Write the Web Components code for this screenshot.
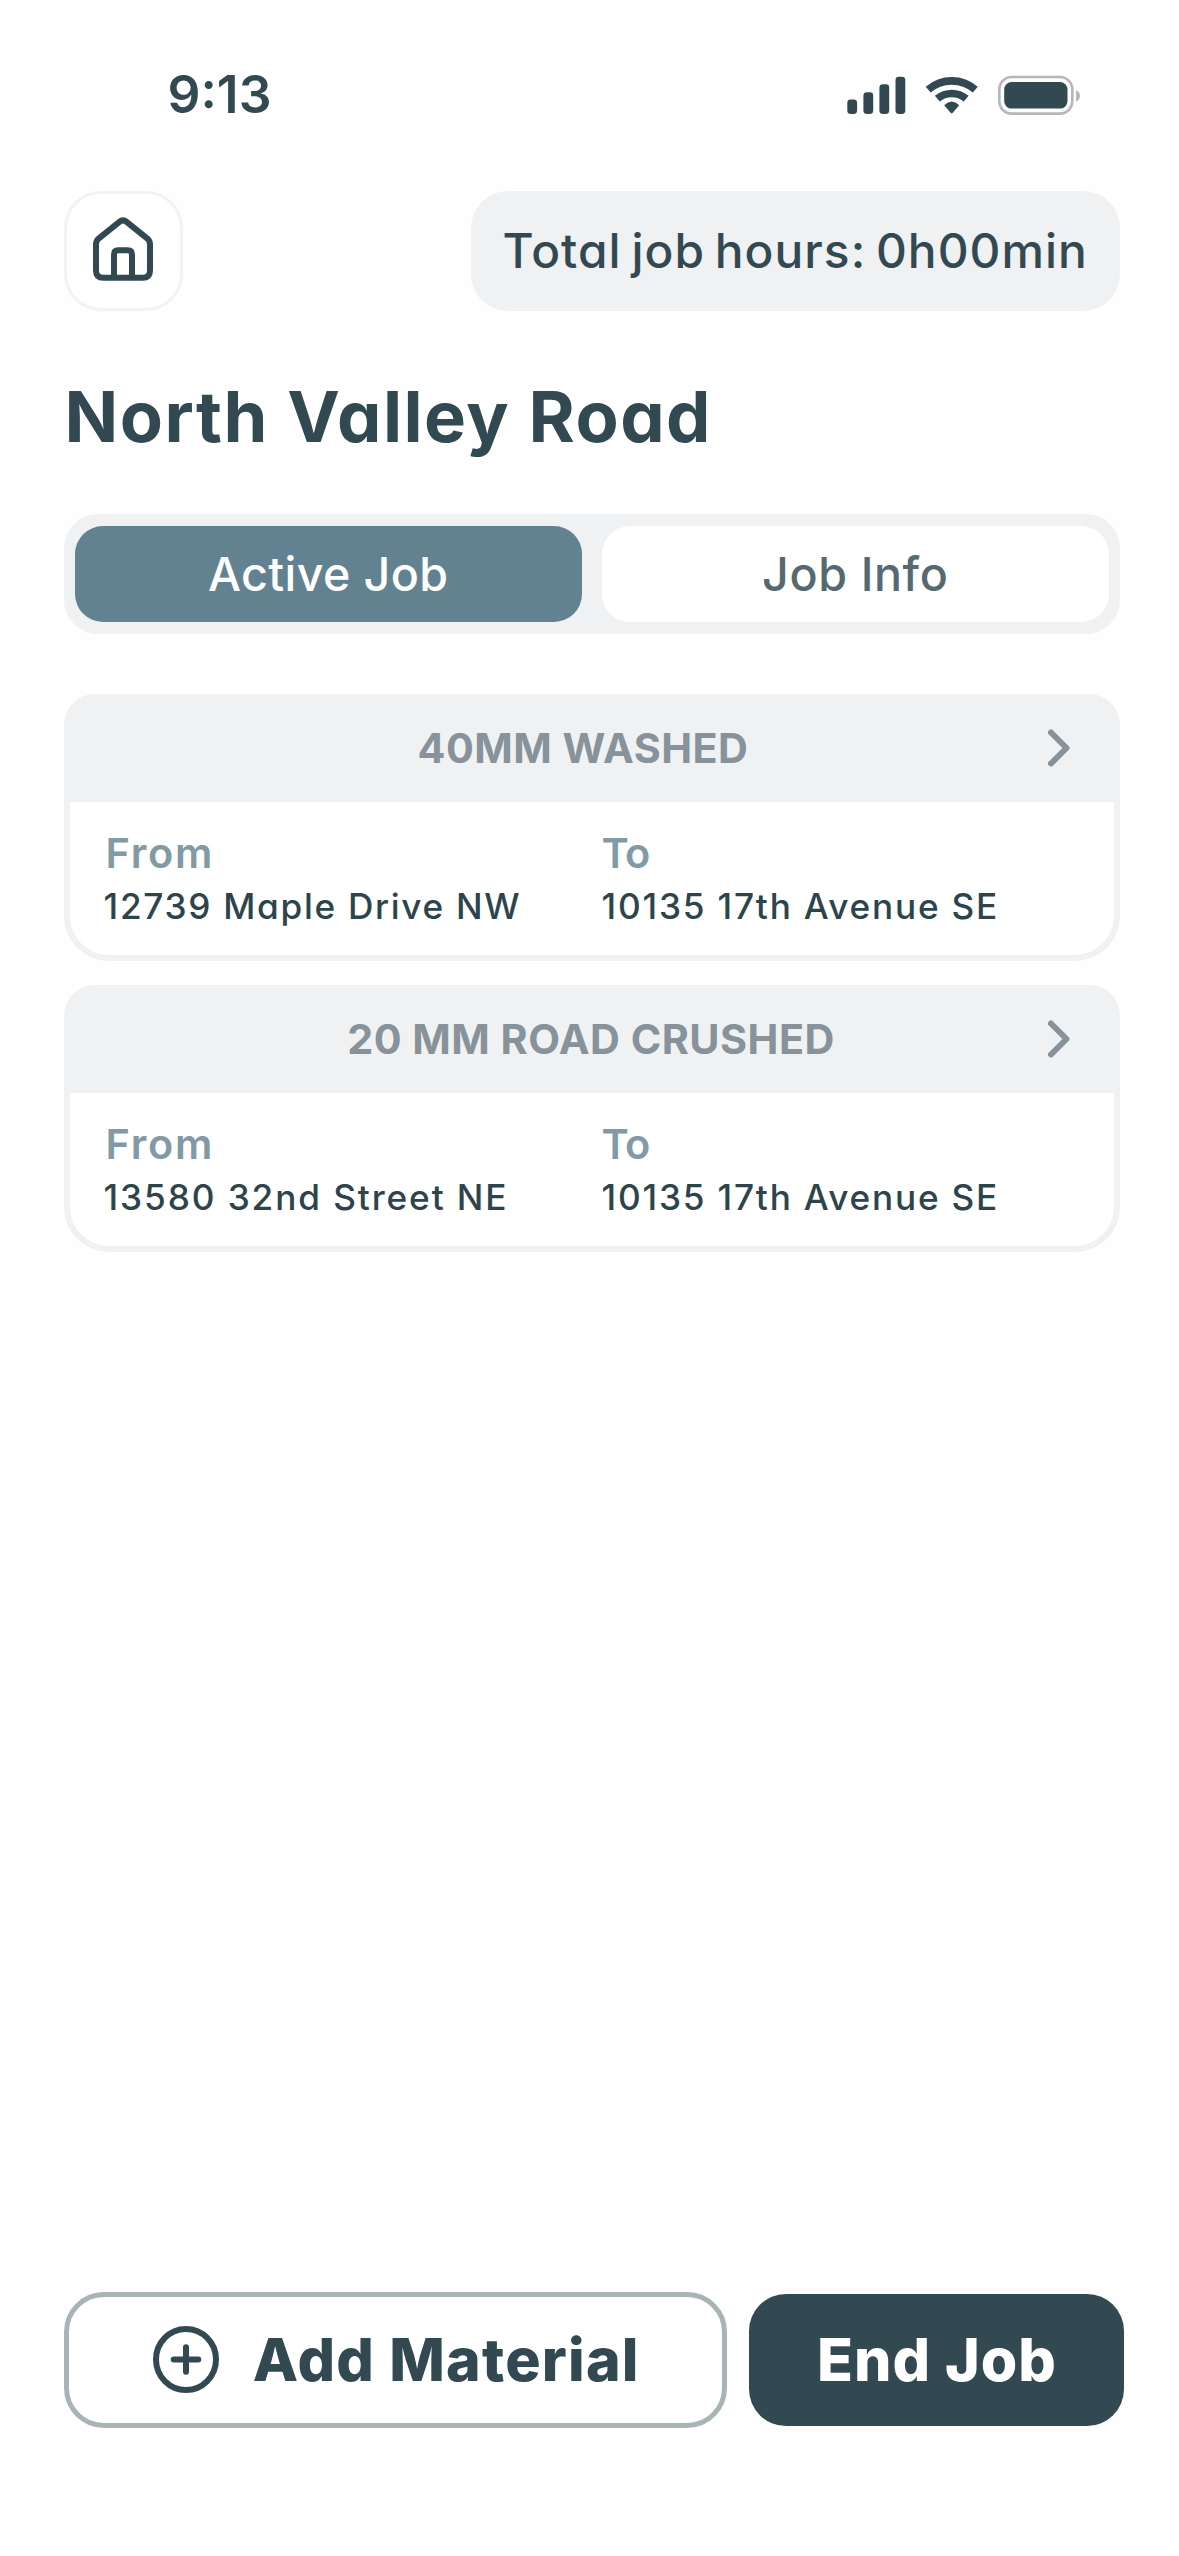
<!DOCTYPE html>
<html lang="en">
<head>
<meta charset="utf-8">
<title>North Valley Road</title>
<style>
  html, body { margin: 0; background: #fefefe; }
  body { font-family: Inter, "Liberation Sans", sans-serif; color: #334951; }
</style>
</head>
<body>
<job-screen>
  <status-bar slot="status">9:13</status-bar>
  <top-bar slot="top">Total job hours: 0h00min</top-bar>
  <job-title slot="title">North Valley Road</job-title>
  <tab-bar slot="tabs">
    <tab-item active style="--ls:.4px">Active Job</tab-item>
    <tab-item style="--ls:.6px">Job Info</tab-item>
  </tab-bar>
  <material-card style="--nudge:16px">
    <span slot="name">40MM WASHED</span>
    <address-field slot="from" style="--label-ls:1.7px;--ls:1.7px"><span slot="label">From</span>12739 Maple Drive NW</address-field>
    <address-field slot="to" style="--label-ls:-.6px;--label-pad:.5px;--ls:1.8px"><span slot="label">To</span>10135 17th Avenue SE</address-field>
  </material-card>
  <material-card>
    <span slot="name">20 MM ROAD CRUSHED</span>
    <address-field slot="from" style="--label-ls:1.7px;--ls:1.9px"><span slot="label">From</span>13580 32nd Street NE</address-field>
    <address-field slot="to" style="--label-ls:-.6px;--label-pad:.5px;--ls:1.8px"><span slot="label">To</span>10135 17th Avenue SE</address-field>
  </material-card>
  <action-button slot="actions" kind="outline">
    <svg slot="icon" width="66" height="67" viewBox="0 0 66 67" fill="none" stroke="#334951" stroke-linecap="round"><ellipse cx="33" cy="33.5" rx="30" ry="30.5" stroke-width="6"/><path d="M33 21.2v24.6M20.7 33.5h24.6" stroke-width="6"/></svg>
    Add Material</action-button>
  <action-button slot="actions" kind="solid">End Job</action-button>
</job-screen>
<script>
const define = (name, html) => customElements.define(name, class extends HTMLElement {
  constructor() {
    super();
    const t = document.createElement('template');
    t.innerHTML = html;
    this.attachShadow({ mode: 'open' }).append(t.content.cloneNode(true));
  }
});

define('job-screen', `
<style>
  :host { display: flex; flex-direction: column; box-sizing: border-box; width: 1179px; height: 2556px; padding: 58px 55.5px 128px 63.5px; background: #fefefe; }
  .list { display: flex; flex-direction: column; gap: 24px; margin: 60px 3.5px 0 0; }
  .actions { display: flex; align-items: center; gap: 21.5px; margin-top: auto; }
</style>
<slot name="status"></slot>
<slot name="top"></slot>
<slot name="title"></slot>
<slot name="tabs"></slot>
<div class="list"><slot></slot></div>
<div class="actions"><slot name="actions"></slot></div>`);

define('status-bar', `
<style>
  :host { display: flex; justify-content: space-between; align-items: center; height: 73px; padding: 0 42.5px 0 104px; }
  .time { font-size: 51.5px; font-weight: 600; line-height: 73px; }
  svg { display: block; }
</style>
<span class="time"><slot></slot></span>
<svg width="234" height="40" viewBox="847 74.6 234 40" fill="#334951">
  <rect x="847.3" y="99" width="9.8" height="14.5" rx="3.4"/>
  <rect x="863.4" y="91.8" width="9.8" height="21.7" rx="3.4"/>
  <rect x="879.4" y="83.8" width="9.8" height="29.7" rx="3.4"/>
  <rect x="895.5" y="76.3" width="9.8" height="37.2" rx="3.4"/>
  <g fill="none" stroke="#334951" stroke-width="7.6">
    <path d="M928.2 89.2A36 36 0 0 1 975.3 89.2"/>
    <path d="M937.3 98.3A22.6 22.6 0 0 1 966.2 98.3"/>
  </g>
  <path d="M944.2 104.9q7.5-7.4 15 0l-6.6 7.8q-.9.9-1.8 0z"/>
  <rect x="999.3" y="76.6" width="73" height="36.6" rx="12.5" fill="none" stroke="#b4b8bc" stroke-width="2.7"/>
  <rect x="1004.2" y="81.6" width="63.3" height="26.6" rx="7.5"/>
  <path d="M1076 89.8c5.4 2.2 5.4 9.4 0 11.6z" fill="#b4b8bc"/>
</svg>`);

define('top-bar', `
<style>
  :host { display: flex; justify-content: space-between; margin: 59.7px 3.5px 0 0; height: 120px; }
  .home { display: flex; align-items: center; justify-content: center; box-sizing: border-box; width: 119.5px; padding-bottom: 4px; border: 3px solid #f2f3f4; border-radius: 37px; background: #fff; }
  .hours { display: flex; align-items: center; justify-content: center; width: 649.5px; border-radius: 37px; background: #eff1f3; font-size: 47.8px; font-weight: 500; letter-spacing: 1.05px; word-spacing: -4px; font-feature-settings: "cv11"; white-space: nowrap; }
</style>
<div class="home">
  <svg width="62" height="64" viewBox="92 217 62 64" fill="none" stroke="#334951" stroke-width="6" stroke-linejoin="round">
    <path d="M96 244.5q0-3.6 2.6-5.9L119.4 221.9q3.6-2.9 7.2 0L147.4 238.6q2.6 2.3 2.6 5.9V270.5q0 7.3-7.3 7.3H103.3q-7.3 0-7.3-7.3z"/>
    <path d="M114 277.5V254.5q0-4.3 4.3-4.3h9.4q4.3 0 4.3 4.3V277.5"/>
  </svg>
</div>
<div class="hours"><span><slot></slot></span></div>`);

define('job-title', `
<style>
  :host { display: block; margin-top: 66px; padding-left: 1px; line-height: 80px; font-size: 70.5px; font-weight: 700; letter-spacing: 1.5px; font-feature-settings: "cv11"; white-space: nowrap; }
</style>
<slot></slot>`);

define('tab-bar', `
<style>
  :host { display: flex; gap: 20.5px; box-sizing: border-box; height: 120px; margin: 57.6px 3.5px 0 0; padding: 12px 11.5px; border-radius: 34px; background: #eff1f3; }
</style>
<slot></slot>`);

define('tab-item', `
<style>
  :host { display: flex; flex: 1; align-items: center; justify-content: center; border-radius: 28px; background: #fff; color: #566970; font-size: 46.6px; font-weight: 500; letter-spacing: var(--ls); font-feature-settings: "cv11"; }
  :host([active]) { background: #628291; color: #fff; }
</style>
<span><slot></slot></span>`);

define('material-card', `
<style>
  :host { display: flex; flex-direction: column; box-sizing: border-box; height: 266.7px; border: 6px solid #eff1f3; border-top: 0; border-radius: 31px 31px 45px 45px; background: #fff; }
  header { display: flex; align-items: center; height: 107.7px; margin: 0 -1px; padding: 0 44.5px 0 66px; background: #eff1f3; border-radius: 26px 26px 0 0; }
  .name { flex: 1; text-align: center; margin-right: var(--nudge, 0px); color: #87929a; font-size: 41.3px; font-weight: 700; letter-spacing: .5px; }
  .body { display: grid; grid-template-columns: 498px 1fr; padding: 23px 0 0 33.5px; }
  svg { display: block; }
</style>
<header>
  <span class="name"><slot name="name"></slot></span>
  <svg width="23" height="38" viewBox="0 0 23 38" fill="none" stroke="#87929a" stroke-width="6" stroke-linecap="round" stroke-linejoin="round"><path d="M3 3.5L18.5 19L3 34.5"/></svg>
</header>
<div class="body"><slot name="from"></slot><slot name="to"></slot></div>`);

define('address-field', `
<style>
  :host { display: flex; flex-direction: column; white-space: nowrap; font-feature-settings: "cv11"; }
  .label { padding-left: var(--label-pad, 2.5px); line-height: 56px; font-size: 41.5px; font-weight: 600; letter-spacing: var(--label-ls); color: #819aa6; }
  .value { padding-left: .6px; line-height: 50px; font-size: 35.2px; font-weight: 500; letter-spacing: var(--ls); color: #2d444c; }
</style>
<span class="label"><slot name="label"></slot></span>
<span class="value"><slot></slot></span>`);

define('action-button', `
<style>
  :host { display: flex; align-items: center; justify-content: center; gap: 34px; box-sizing: border-box; white-space: nowrap; font-size: 59px; font-weight: 800; }
  :host([kind="outline"]) { width: 663.5px; height: 136.5px; padding-left: 2px; border: 5px solid #a9b4b6; border-radius: 40px; background: #fff; letter-spacing: 1.2px; }
  :host([kind="solid"]) { width: 375px; height: 132px; padding-left: 2px; border-radius: 37px; background: #334951; color: #fff; letter-spacing: 1px; }
  ::slotted(svg) { display: block; }
</style>
<slot name="icon"></slot><span><slot></slot></span>`);
</script>
</body>
</html>
